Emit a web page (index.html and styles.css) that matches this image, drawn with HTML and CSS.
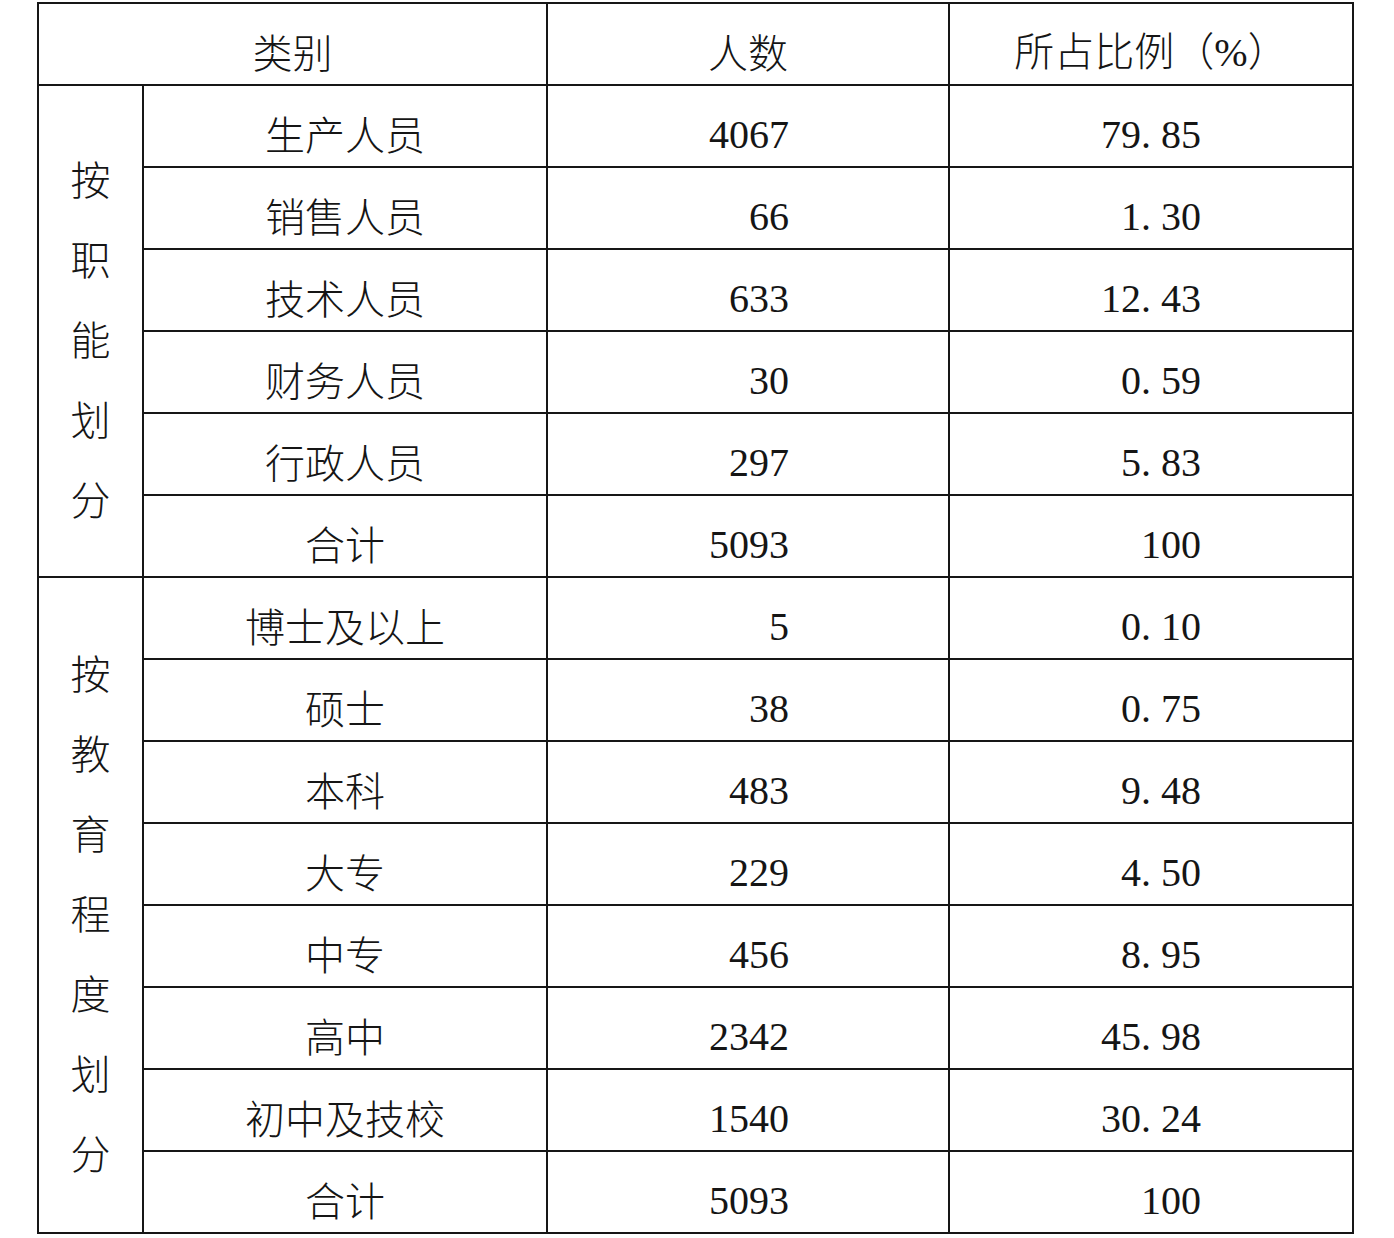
FILE: index.html
```html
<!DOCTYPE html>
<html lang="zh">
<head>
<meta charset="utf-8">
<title>人员构成</title>
<link rel="stylesheet" href="styles.css">
</head>
<body>
<table class="staff">
  <colgroup>
    <col class="c-group">
    <col class="c-name">
    <col class="c-count">
    <col class="c-pct">
  </colgroup>
  <thead>
    <tr>
      <th colspan="2">类别</th>
      <th>人数</th>
      <th>所占比例（<span class="pc">%</span>）</th>
    </tr>
  </thead>
  <tbody>
    <tr>
      <td rowspan="6" class="group"><div class="vtext">按职能划分</div></td>
      <td class="name">生产人员</td><td class="num n1">4067</td><td class="num n2">79<span class="dot">.</span>85</td>
    </tr>
    <tr><td class="name">销售人员</td><td class="num n1">66</td><td class="num n2">1<span class="dot">.</span>30</td></tr>
    <tr><td class="name">技术人员</td><td class="num n1">633</td><td class="num n2">12<span class="dot">.</span>43</td></tr>
    <tr><td class="name">财务人员</td><td class="num n1">30</td><td class="num n2">0<span class="dot">.</span>59</td></tr>
    <tr><td class="name">行政人员</td><td class="num n1">297</td><td class="num n2">5<span class="dot">.</span>83</td></tr>
    <tr><td class="name">合计</td><td class="num n1">5093</td><td class="num n2">100</td></tr>
    <tr>
      <td rowspan="8" class="group"><div class="vtext">按教育程度划分</div></td>
      <td class="name">博士及以上</td><td class="num n1">5</td><td class="num n2">0<span class="dot">.</span>10</td>
    </tr>
    <tr><td class="name">硕士</td><td class="num n1">38</td><td class="num n2">0<span class="dot">.</span>75</td></tr>
    <tr><td class="name">本科</td><td class="num n1">483</td><td class="num n2">9<span class="dot">.</span>48</td></tr>
    <tr><td class="name">大专</td><td class="num n1">229</td><td class="num n2">4<span class="dot">.</span>50</td></tr>
    <tr><td class="name">中专</td><td class="num n1">456</td><td class="num n2">8<span class="dot">.</span>95</td></tr>
    <tr><td class="name">高中</td><td class="num n1">2342</td><td class="num n2">45<span class="dot">.</span>98</td></tr>
    <tr><td class="name">初中及技校</td><td class="num n1">1540</td><td class="num n2">30<span class="dot">.</span>24</td></tr>
    <tr><td class="name">合计</td><td class="num n1">5093</td><td class="num n2">100</td></tr>
  </tbody>
</table>
</body>
</html>
```
FILE: styles.css
```css
html, body {
  margin: 0;
  padding: 0;
  background: #ffffff;
}

body {
  padding: 2px 0 0 37px;
  font-family: "Noto Sans CJK SC", sans-serif;
  color: #151515;
}

.staff {
  border-collapse: collapse;
  table-layout: fixed;
  width: 1315px;
}

.c-group { width: 105px; }
.c-name { width: 404px; }
.c-count { width: 402px; }
.c-pct { width: 404px; }

.staff th,
.staff td {
  border: 2px solid #161616;
  height: 80px;
  padding: 14px 0 0 0;
  box-sizing: border-box;
  vertical-align: middle;
  font-size: 40px;
  font-weight: 300;
  line-height: 44px;
  text-align: center;
  font-family: "Noto Sans CJK SC", sans-serif;
}

.staff tr { height: 82px; }

.staff .pc {
  font-family: "Liberation Serif", serif;
  font-weight: 400;
}

.staff td.num {
  padding-top: 18px;
  text-align: right;
  font-family: "Liberation Serif", serif;
  font-weight: 400;
}

.staff td.n1 { padding-right: 159px; }
.staff td.n2 { padding-right: 151px; }

.dot {
  display: inline-block;
  width: 0.5em;
  text-align: left;
}

.staff td.group {
  padding-top: 14px;
}

.vtext {
  width: 1em;
  margin: 0 auto;
  line-height: 80px;
  font-size: 40px;
}
```
